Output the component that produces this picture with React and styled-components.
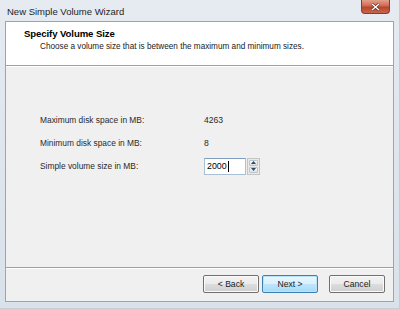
import React from 'react'
import styled, { createGlobalStyle } from 'styled-components'

const Global = createGlobalStyle`
  html, body {
    margin: 0;
    padding: 0;
    background: #ffffff;
  }
  body {
    font-family: "Liberation Sans", Arial, sans-serif;
  }
`

const Window = styled.div`
  width: 400px;
  height: 309px;
  box-sizing: border-box;
  display: flex;
  flex-direction: column;
  background: linear-gradient(180deg, #e6ebf1 0%, #dfe6ee 40%, #d9e1ea 100%);
  border-right: 1px solid #c8ccd2;
  border-bottom: 1px solid #c8ccd2;
`

const TitleBar = styled.div`
  height: 21px;
  flex: none;
  display: flex;
  align-items: flex-start;
  justify-content: space-between;
  padding: 0 9px 0 7px;
`

const Title = styled.span`
  font-size: 9.5px;
  color: #1e1e1e;
  line-height: 19px;
  padding-top: 2px;
`

const CloseButton = styled.div`
  width: 29px;
  height: 14px;
  border-radius: 0 0 4px 4px;
  border: 1px solid #8a3a2a;
  border-top: none;
  background: linear-gradient(180deg, #e2a08e 0%, #cf6a52 45%, #b9442c 55%, #c9664c 100%);
  display: flex;
  align-items: center;
  justify-content: center;
  box-sizing: border-box;
  svg {
    display: block;
  }
`

const Client = styled.div`
  flex: 1;
  margin: 0 5px 6px 5px;
  border: 1px solid #9ea4ab;
  display: flex;
  flex-direction: column;
  background: #f0f0f0;
  min-height: 0;
`

const Header = styled.div`
  height: 44px;
  flex: none;
  background: #ffffff;
  border-bottom: 1px solid #a0a0a0;
  box-shadow: 0 1px 0 #ffffff;
  box-sizing: border-box;
  padding: 5px 0 0 18px;
`

const HeaderTitle = styled.div`
  font-size: 9.6px;
  font-weight: bold;
  color: #000;
  line-height: 13px;
  letter-spacing: -0.1px;
`

const HeaderText = styled.div`
  font-size: 8.2px;
  color: #1a1a1a;
  line-height: 13px;
  padding-left: 16px;
`

const Body = styled.div`
  flex: 1;
  padding: 43px 0 0 34px;
  display: grid;
  grid-template-columns: 164px auto;
  grid-auto-rows: 22px;
  align-content: start;
  row-gap: 1px;
`

const Label = styled.div`
  font-size: 8.4px;
  color: #2a2a2a;
  display: flex;
  align-items: center;
`

const Value = styled.div`
  font-size: 8.6px;
  color: #2a2a2a;
  display: flex;
  align-items: center;
`

const Spin = styled.div`
  display: flex;
  align-items: center;
  gap: 1px;
`

const Input = styled.div`
  width: 42px;
  height: 17px;
  box-sizing: border-box;
  border: 1px solid #a9bfd6;
  border-top-color: #7f9dc0;
  background: #ffffff;
  font-size: 8.8px;
  color: #000;
  display: flex;
  align-items: center;
  padding-left: 2px;
`

const Caret = styled.span`
  display: inline-block;
  width: 1px;
  height: 11px;
  background: #000;
  margin-left: 1px;
`

const Arrows = styled.div`
  width: 13px;
  height: 17px;
  box-sizing: border-box;
  border: 1px solid #c4c4c4;
  background: #eaeaea;
  display: flex;
  flex-direction: column;
  padding: 1px;
  gap: 1px;
`

const ArrowBtn = styled.div`
  flex: 1;
  border: 1px solid #bcc4cc;
  border-radius: 1px;
  background: linear-gradient(180deg, #f7f7f7, #dde2e6);
  display: flex;
  align-items: center;
  justify-content: center;
  svg {
    display: block;
  }
`

const Footer = styled.div`
  height: 34px;
  flex: none;
  border-top: 1px solid #a0a0a0;
  box-shadow: inset 0 1px 0 #ffffff;
  box-sizing: border-box;
  display: flex;
  align-items: center;
  justify-content: flex-end;
  padding: 0 8px 2px 0;
`

const Button = styled.button`
  width: ${p => p.$w || 56}px;
  height: 18px;
  margin-left: ${p => p.$gap || 0}px;
  padding: 0;
  box-sizing: border-box;
  font-family: "Liberation Sans", Arial, sans-serif;
  font-size: 8.6px;
  color: #1a1a1a;
  border-radius: 2px;
  border: 1px solid ${p => (p.$default ? '#3c7fb1' : '#707070')};
  background: ${p =>
    p.$default
      ? 'linear-gradient(180deg, #eaf6fd 0%, #d9f0fc 50%, #bee6fd 51%, #a7d9f5 100%)'
      : 'linear-gradient(180deg, #f2f2f2 0%, #ebebeb 50%, #dddddd 51%, #cfcfcf 100%)'};
  box-shadow: inset 0 0 0 1px ${p => (p.$default ? '#b8e4fb' : '#fbfbfb')};
`

function App() {
  return (
    <>
      <Global />
      <Window>
        <TitleBar>
          <Title>New Simple Volume Wizard</Title>
          <CloseButton>
            <svg width="9" height="8" viewBox="0 0 9 8">
              <path d="M1 1 L8 7 M8 1 L1 7" stroke="#5a2418" strokeWidth="2.6" />
              <path d="M1 1 L8 7 M8 1 L1 7" stroke="#ffffff" strokeWidth="1.5" />
            </svg>
          </CloseButton>
        </TitleBar>
        <Client>
          <Header>
            <HeaderTitle>Specify Volume Size</HeaderTitle>
            <HeaderText>Choose a volume size that is between the maximum and minimum sizes.</HeaderText>
          </Header>
          <Body>
            <Label>Maximum disk space in MB:</Label>
            <Value>4263</Value>
            <Label>Minimum disk space in MB:</Label>
            <Value>8</Value>
            <Label>Simple volume size in MB:</Label>
            <Spin>
              <Input>
                2000<Caret />
              </Input>
              <Arrows>
                <ArrowBtn>
                  <svg width="5" height="3" viewBox="0 0 5 3">
                    <path d="M0 3 L2.5 0 L5 3 Z" fill="#2b4b6b" />
                  </svg>
                </ArrowBtn>
                <ArrowBtn>
                  <svg width="5" height="3" viewBox="0 0 5 3">
                    <path d="M0 0 L2.5 3 L5 0 Z" fill="#2b4b6b" />
                  </svg>
                </ArrowBtn>
              </Arrows>
            </Spin>
          </Body>
          <Footer>
            <Button>&lt; Back</Button>
            <Button $default $gap={3}>Next &gt;</Button>
            <Button $gap={11}>Cancel</Button>
          </Footer>
        </Client>
      </Window>
    </>
  )
}

export default App
